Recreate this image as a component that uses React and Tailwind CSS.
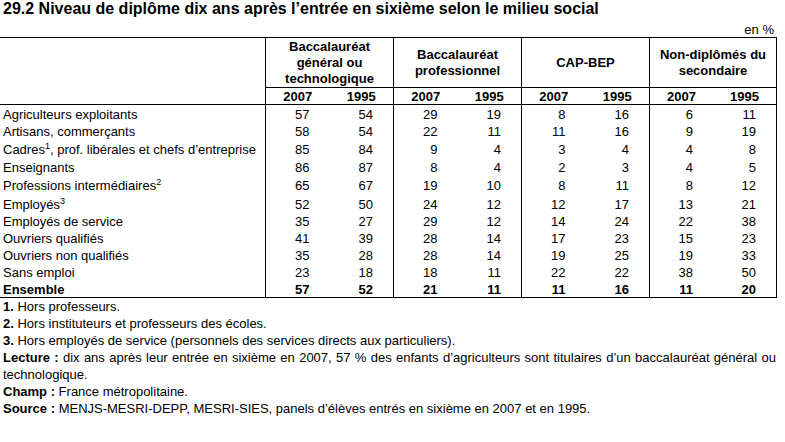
import React from "react";

const groups = [
  ["Baccalauréat", "général ou", "technologique"],
  ["Baccalauréat", "professionnel"],
  ["CAP-BEP"],
  ["Non-diplômés du", "secondaire"],
];

const rows = [
  { label: "Agriculteurs exploitants", values: [57, 54, 29, 19, 8, 16, 6, 11], h: "h-[17px]" },
  { label: "Artisans, commerçants", values: [58, 54, 22, 11, 11, 16, 9, 19], h: "h-[17px]" },
  { label: "Cadres", sup: "1", rest: ", prof. libérales et chefs d’entreprise", values: [85, 84, 9, 4, 3, 4, 4, 8], h: "h-[18px]" },
  { label: "Enseignants", values: [86, 87, 8, 4, 2, 3, 4, 5], h: "h-[18px]" },
  { label: "Professions intermédiaires", sup: "2", values: [65, 67, 19, 10, 8, 11, 8, 12], h: "h-[18px]" },
  { label: "Employés", sup: "3", values: [52, 50, 24, 12, 12, 17, 13, 21], h: "h-[19px]" },
  { label: "Employés de service", values: [35, 27, 29, 12, 14, 24, 22, 38], h: "h-[17px]" },
  { label: "Ouvriers qualifiés", values: [41, 39, 28, 14, 17, 23, 15, 23], h: "h-[17px]" },
  { label: "Ouvriers non qualifiés", values: [35, 28, 28, 14, 19, 25, 19, 33], h: "h-[17px]" },
  { label: "Sans emploi", values: [23, 18, 18, 11, 22, 22, 38, 50], h: "h-[17px]" },
  { label: "Ensemble", values: [57, 52, 21, 11, 11, 16, 11, 20], h: "h-[17px]", bold: true },
];

function GroupCell({ last, className, children }) {
  return (
    <div className={`w-[128px] flex border-l border-black ${last ? "border-r" : ""} ${className || ""}`}>
      {children}
    </div>
  );
}

export default function App() {
  return (
    <div className="w-[785px] h-[442px] bg-white text-black font-['Liberation_Sans',Arial,sans-serif]">
      <div className="h-[22px] pl-[3px] text-[16px] font-bold leading-[18px] whitespace-nowrap">
        29.2 Niveau de diplôme dix ans après l’entrée en sixième selon le milieu social
      </div>
      <div className="w-[777px] h-[15px] pr-[3px] text-right text-[13px] leading-[15px]">en %</div>

      <div className="w-[777px] border-t border-b border-black text-[13px] leading-[15px]">
        {/* group headings */}
        <div className="flex h-[50px]">
          <div className="w-[265px]" />
          {groups.map((g, i) => (
            <GroupCell key={i} last={i === 3} className="border-b items-center justify-center">
              <div className="text-center font-bold leading-[16px]">
                {g.map((line, j) => (
                  <div key={j}>{line}</div>
                ))}
              </div>
            </GroupCell>
          ))}
        </div>

        {/* years */}
        <div className="flex h-[17px] border-b border-black">
          <div className="w-[265px]" />
          {groups.map((_, i) => (
            <GroupCell key={i} last={i === 3}>
              <div className="w-1/2 flex items-end justify-center font-bold">2007</div>
              <div className="w-1/2 flex items-end justify-center font-bold">1995</div>
            </GroupCell>
          ))}
        </div>

        {/* data rows */}
        {rows.map((r, i) => (
          <div key={i} className={`flex ${r.h} ${r.bold ? "font-bold" : ""}`}>
            <div className="w-[265px] pl-[3px] flex items-end whitespace-nowrap">
              <span>
                {r.label}
                {r.sup && <span className="relative -top-[5px] text-[9px] leading-none">{r.sup}</span>}
                {r.rest}
              </span>
            </div>
            {[0, 1, 2, 3].map((g) => (
              <GroupCell key={g} last={g === 3}>
                <div className="w-1/2 flex items-end justify-end pr-[20px]">{r.values[g * 2]}</div>
                <div className="w-1/2 flex items-end justify-end pr-[20px]">{r.values[g * 2 + 1]}</div>
              </GroupCell>
            ))}
          </div>
        ))}
      </div>

      <div className="pl-[3px] text-[13px] leading-[17px]">
        <div className="whitespace-nowrap"><b>1.</b> Hors professeurs.</div>
        <div className="whitespace-nowrap"><b>2.</b> Hors instituteurs et professeurs des écoles.</div>
        <div className="whitespace-nowrap"><b>3.</b> Hors employés de service (personnels des services directs aux particuliers).</div>
        <div className="w-[773px] text-justify">
          <b>Lecture :</b> dix ans après leur entrée en sixième en 2007, 57 % des enfants d’agriculteurs sont titulaires d’un baccalauréat général ou technologique.
        </div>
        <div className="whitespace-nowrap"><b>Champ :</b> France métropolitaine.</div>
        <div className="whitespace-nowrap"><b>Source :</b> MENJS-MESRI-DEPP, MESRI-SIES, panels d’élèves entrés en sixième en 2007 et en 1995.</div>
      </div>
    </div>
  );
}
